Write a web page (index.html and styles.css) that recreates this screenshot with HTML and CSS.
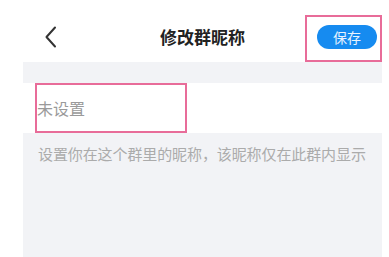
FILE: index.html
```html
<!DOCTYPE html>
<html lang="zh">
<head>
<meta charset="utf-8">
<link rel="stylesheet" href="styles.css">
</head>
<body>
<div class="screen">
  <header class="header">
    <div class="back">
      <svg width="14" height="22" viewBox="0 0 14 22"><path d="M11 1.5 L2.5 11 L11 20.5" fill="none" stroke="#333" stroke-width="2" stroke-linecap="round" stroke-linejoin="round"/></svg>
    </div>
    <div class="title">修改群昵称</div>
    <div class="actions"><button class="save">保存</button></div>
    <div class="mark mark-save"></div>
  </header>
  <div class="band"></div>
  <div class="input-row">
    <span class="placeholder">未设置</span>
    <div class="mark mark-input"></div>
  </div>
  <div class="help">设置你在这个群里的昵称，该昵称仅在此群内显示</div>
</div>
</body>
</html>
```
FILE: styles.css
```css
html, body {
  margin: 0;
  padding: 0;
  background: #ffffff;
  height: 100%;
  overflow: hidden;
}
body {
  font-family: "Noto Sans CJK SC", "Noto Sans", sans-serif;
}
.screen {
  margin-left: 23px;
  width: 359px;
  height: 257px;
  display: flex;
  flex-direction: column;
  background: #f2f3f6;
}
.header {
  position: relative;
  height: 50px;
  padding-top: 12px;
  background: #ffffff;
  display: grid;
  grid-template-columns: 1fr auto 1fr;
  align-items: center;
}
.back {
  padding-left: 21px;
  display: flex;
  align-items: center;
}
.back svg { display: block; }
.title {
  font-size: 17px;
  font-weight: 700;
  color: #222;
  line-height: 24px;
}
.actions {
  display: flex;
  justify-content: flex-end;
  padding-right: 5px;
}
.save {
  width: 60px;
  height: 24px;
  border: none;
  border-radius: 12px;
  background: #168bf0;
  color: #e8f3ff;
  font-family: "Noto Sans CJK SC", sans-serif;
  font-size: 14px;
  line-height: 24px;
  padding: 0;
}
.band {
  height: 21px;
}
.input-row {
  position: relative;
  height: 50px;
  background: #ffffff;
  display: flex;
  align-items: center;
  padding-left: 14px;
}
.placeholder {
  font-size: 16px;
  color: #9a9a9a;
}
.help {
  padding: 11px 0 0 15px;
  font-size: 15px;
  line-height: 20px;
  color: #ababab;
  letter-spacing: -0.1px;
}
.mark {
  position: absolute;
  border: 2.5px solid #e86c99;
  box-sizing: border-box;
}
.mark-save {
  left: 282px;
  top: 15px;
  width: 77px;
  height: 47px;
}
.mark-input {
  left: 12px;
  top: 0;
  width: 152px;
  height: 50px;
}
```
